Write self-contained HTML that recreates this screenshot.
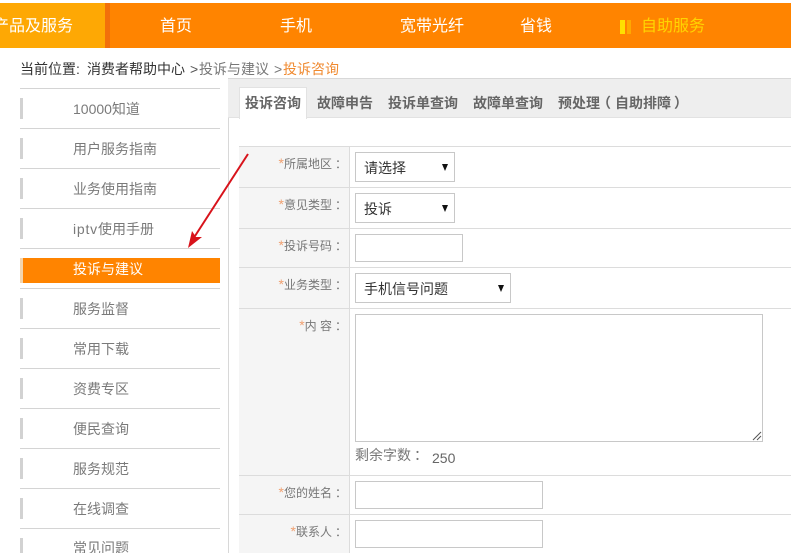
<!DOCTYPE html>
<html lang="zh">
<head>
<meta charset="utf-8">
<title>投诉咨询</title>
<style>
html,body{margin:0;padding:0;background:#fff;overflow:hidden}
body{width:791px;height:553px;position:relative;font-family:"Liberation Sans","Noto Sans CJK SC",sans-serif;font-size:14px;color:#666}
.a{position:absolute;box-sizing:border-box}
.t{position:absolute;white-space:nowrap;line-height:20px}
.nav{color:#fff;font-size:16px;line-height:24px;top:15px}
.hl{position:absolute;left:20px;width:200px;height:1px;background:#d4d4d4}
.bar{position:absolute;left:20px;width:3px;height:21px;background:#d2d2d2}
.side{position:absolute;left:73px;font-size:14px;color:#7a7a7a;line-height:20px;white-space:nowrap}
.tab{position:absolute;top:93px;font-size:14px;font-weight:bold;color:#666;line-height:20px;white-space:nowrap}
.fl{position:absolute;left:239px;width:552px;height:1px;background:#dcdcdc}
.lb{position:absolute;right:444px;font-size:12px;color:#777;line-height:18px;white-space:nowrap}
.lb i{font-style:normal;color:#f0a070;font-size:14px}
.c{font-family:"Liberation Sans","Noto Sans CJK TC",sans-serif;margin-left:3px}
.box{position:absolute;left:355px;border:1px solid #c8c8c8;background:#fff;box-sizing:border-box}
.sel{font-size:14px;color:#333;line-height:30px;padding-left:8px;height:30px}
.sel:after{content:"";position:absolute;top:11px;right:6px;border-left:3.5px solid transparent;border-right:3.5px solid transparent;border-top:7px solid #111}
.bc{position:absolute;top:59px;font-size:14px;line-height:20px;white-space:nowrap}
</style>
</head>
<body>
<div class="a" style="left:0;top:3px;width:791px;height:45px;background:#ff8400"></div>
<div class="a" style="left:0;top:3px;width:105px;height:45px;background:#fea804"></div>
<div class="a" style="left:105px;top:3px;width:5px;height:45px;background:#f2700a"></div>
<div class="t nav" style="left:-7px">产品及服务</div>
<div class="t nav" style="left:160px">首页</div>
<div class="t nav" style="left:280px">手机</div>
<div class="t nav" style="left:400px">宽带光纤</div>
<div class="t nav" style="left:520px">省钱</div>
<div class="a" style="left:620px;top:20px;width:5px;height:14px;background:#ffe000"></div>
<div class="a" style="left:627px;top:20px;width:4px;height:14px;background:#ffa800"></div>
<div class="t nav" style="left:641px;color:#ffd500">自助服务</div>

<div class="bc" style="left:20px;color:#333">当前位置:</div>
<div class="bc" style="left:87px;color:#333">消费者帮助中心</div>
<div class="bc" style="left:190px;color:#555">&gt;</div>
<div class="bc" style="left:199px;color:#777">投诉与建议</div>
<div class="bc" style="left:274px;color:#777">&gt;</div>
<div class="bc" style="left:283px;color:#f08a30">投诉咨询</div>

<div class="hl" style="top:88px"></div>
<div class="hl" style="top:128px"></div>
<div class="hl" style="top:168px"></div>
<div class="hl" style="top:208px"></div>
<div class="hl" style="top:248px"></div>
<div class="hl" style="top:288px"></div>
<div class="hl" style="top:328px"></div>
<div class="hl" style="top:368px"></div>
<div class="hl" style="top:408px"></div>
<div class="hl" style="top:448px"></div>
<div class="hl" style="top:488px"></div>
<div class="hl" style="top:528px"></div>
<div class="bar" style="top:98px"></div>
<div class="bar" style="top:138px"></div>
<div class="bar" style="top:178px"></div>
<div class="bar" style="top:218px"></div>
<div class="bar" style="top:298px"></div>
<div class="bar" style="top:338px"></div>
<div class="bar" style="top:378px"></div>
<div class="bar" style="top:418px"></div>
<div class="bar" style="top:458px"></div>
<div class="bar" style="top:498px"></div>
<div class="bar" style="top:538px"></div>
<div class="a" style="left:20px;top:258px;width:3px;height:25px;background:#f3d5ae"></div>
<div class="a" style="left:23px;top:258px;width:197px;height:25px;background:#ff8400"></div>
<div class="side" style="top:99px">10000知道</div>
<div class="side" style="top:139px">用户服务指南</div>
<div class="side" style="top:179px">业务使用指南</div>
<div class="side" style="top:219px"><span style="letter-spacing:.8px">iptv</span>使用手册</div>
<div class="side" style="top:259px;color:#fff">投诉与建议</div>
<div class="side" style="top:299px">服务监督</div>
<div class="side" style="top:339px">常用下载</div>
<div class="side" style="top:379px">资费专区</div>
<div class="side" style="top:419px">便民查询</div>
<div class="side" style="top:459px">服务规范</div>
<div class="side" style="top:499px">在线调查</div>
<div class="side" style="top:538px">常见问题</div>

<div class="a" style="left:228px;top:78px;width:1px;height:475px;background:#d8d8d8"></div>
<div class="a" style="left:228px;top:78px;width:563px;height:40px;background:#eeeeee;border-top:1px solid #d8d8d8;border-bottom:1px solid #e2e2e2"></div>
<div class="a" style="left:239px;top:87px;width:68px;height:32px;background:#fff;border:1px solid #e2e2e2;border-bottom:none"></div>
<div class="tab" style="left:245px">投诉咨询</div>
<div class="tab" style="left:317px">故障申告</div>
<div class="tab" style="left:388px">投诉单查询</div>
<div class="tab" style="left:473px">故障单查询</div>
<div class="tab" style="left:558px">预处理</div>
<div class="tab" style="left:597px">（</div>
<div class="tab" style="left:615px">自助排障</div>
<div class="tab" style="left:674px">）</div>

<div class="a" style="left:239px;top:146px;width:110px;height:407px;background:#f5f5f5"></div>
<div class="a" style="left:349px;top:146px;width:1px;height:407px;background:#dcdcdc"></div>
<div class="fl" style="top:146px"></div>
<div class="fl" style="top:187px"></div>
<div class="fl" style="top:228px"></div>
<div class="fl" style="top:267px"></div>
<div class="fl" style="top:308px"></div>
<div class="fl" style="top:475px"></div>
<div class="fl" style="top:514px"></div>

<div class="lb" style="top:154px"><i>*</i>所属地区<span class="c">：</span></div>
<div class="lb" style="top:195px"><i>*</i>意见类型<span class="c">：</span></div>
<div class="lb" style="top:236px"><i>*</i>投诉号码<span class="c">：</span></div>
<div class="lb" style="top:275px"><i>*</i>业务类型<span class="c">：</span></div>
<div class="lb" style="top:316px"><i>*</i>内 容<span class="c">：</span></div>
<div class="lb" style="top:483px"><i>*</i>您的姓名<span class="c">：</span></div>
<div class="lb" style="top:522px"><i>*</i>联系人<span class="c">：</span></div>

<div class="box sel" style="top:152px;width:100px">请选择</div>
<div class="box sel" style="top:193px;width:100px">投诉</div>
<div class="box" style="top:234px;width:108px;height:28px"></div>
<div class="box sel" style="top:273px;width:156px">手机信号问题</div>
<div class="box" style="top:314px;width:408px;height:128px"></div>
<svg class="a" style="left:752px;top:431px" width="10" height="10" viewBox="0 0 10 10"><path d="M1 9L9 1M5 9L9 5" stroke="#555" stroke-width="1" fill="none"/></svg>
<div class="t" style="left:355px;top:445px;font-size:14px;color:#777">剩余字数<span class="c">：</span></div>
<div class="t" style="left:432px;top:448px;font-size:14px;color:#666">250</div>
<div class="box" style="top:481px;width:188px;height:28px"></div>
<div class="box" style="top:520px;width:188px;height:28px"></div>

<svg class="a" style="left:180px;top:150px" width="72" height="102" viewBox="180 150 72 102">
<path d="M248 154L195 236" stroke="#d8131b" stroke-width="2" fill="none"/>
<path d="M188 248L192 231L196 237L202 237Z" fill="#d8131b"/>
</svg>
</body>
</html>
